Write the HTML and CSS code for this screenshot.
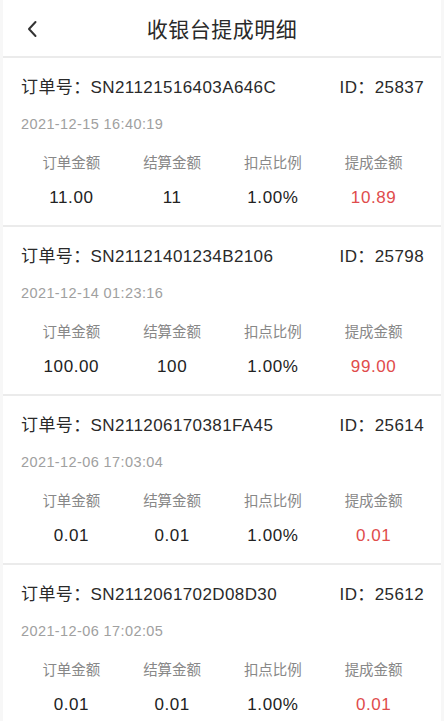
FILE: index.html
```html
<!DOCTYPE html>
<html lang="zh-cn">
<head>
    <meta charset="UTF-8">
    <meta name="viewport" content="width=device-width, initial-scale=1.0">
    <title>收银台提成明细</title>
    <link rel="stylesheet" href="styles.css">
</head>
<body>
    <header class="nav">
        <span class="back">
            <svg width="12" height="18" viewBox="0 0 12 18"><path d="M9.5 2 L3 9 L9.5 16" fill="none" stroke="#333" stroke-width="2" stroke-linecap="round" stroke-linejoin="round"/></svg>
        </span>
        <h1 class="title">收银台提成明细</h1>
    </header>

    <div class="list">
        <div class="card">
            <div class="row-top">
                <span>订单号：SN21121516403A646C</span>
                <span>ID：25837</span>
            </div>
            <div class="time">2021-12-15 16:40:19</div>
            <div class="stats">
                <div class="stat"><span class="label">订单金额</span><span class="value">11.00</span></div>
                <div class="stat"><span class="label">结算金额</span><span class="value">11</span></div>
                <div class="stat"><span class="label">扣点比例</span><span class="value">1.00%</span></div>
                <div class="stat"><span class="label">提成金额</span><span class="value red">10.89</span></div>
            </div>
        </div>

        <div class="card">
            <div class="row-top">
                <span>订单号：SN21121401234B2106</span>
                <span>ID：25798</span>
            </div>
            <div class="time">2021-12-14 01:23:16</div>
            <div class="stats">
                <div class="stat"><span class="label">订单金额</span><span class="value">100.00</span></div>
                <div class="stat"><span class="label">结算金额</span><span class="value">100</span></div>
                <div class="stat"><span class="label">扣点比例</span><span class="value">1.00%</span></div>
                <div class="stat"><span class="label">提成金额</span><span class="value red">99.00</span></div>
            </div>
        </div>

        <div class="card">
            <div class="row-top">
                <span>订单号：SN211206170381FA45</span>
                <span>ID：25614</span>
            </div>
            <div class="time">2021-12-06 17:03:04</div>
            <div class="stats">
                <div class="stat"><span class="label">订单金额</span><span class="value">0.01</span></div>
                <div class="stat"><span class="label">结算金额</span><span class="value">0.01</span></div>
                <div class="stat"><span class="label">扣点比例</span><span class="value">1.00%</span></div>
                <div class="stat"><span class="label">提成金额</span><span class="value red">0.01</span></div>
            </div>
        </div>

        <div class="card">
            <div class="row-top">
                <span>订单号：SN2112061702D08D30</span>
                <span>ID：25612</span>
            </div>
            <div class="time">2021-12-06 17:02:05</div>
            <div class="stats">
                <div class="stat"><span class="label">订单金额</span><span class="value">0.01</span></div>
                <div class="stat"><span class="label">结算金额</span><span class="value">0.01</span></div>
                <div class="stat"><span class="label">扣点比例</span><span class="value">1.00%</span></div>
                <div class="stat"><span class="label">提成金额</span><span class="value red">0.01</span></div>
            </div>
        </div>
    </div>
</body>
</html>
```

FILE: styles.css
```css
body {
    margin: 0;
    background-color: #f7f7f7;
    font-family: "Liberation Sans", "Noto Sans CJK SC", sans-serif;
    color: #333333;
    height: 721px;
    overflow: hidden;
}

.nav {
    height: 56px;
    margin: 0 3px;
    background: #ffffff;
    display: flex;
    align-items: center;
    justify-content: center;
    position: relative;
    border-bottom: 2px solid #ebebeb;
}

.back {
    position: absolute;
    left: 23px;
    top: 20px;
    display: flex;
}

.title {
    margin: 0;
    font-size: 21px;
    font-weight: 400;
    color: #2a2a2a;
    letter-spacing: 0.5px;
}

.list {
    display: flex;
    flex-direction: column;
    gap: 2px;
    margin: 0 3px;
    background: #ebebeb;
}

.card {
    height: 167px;
    background: #ffffff;
    padding: 16px 17px 0 18px;
    box-sizing: border-box;
}

.row-top {
    display: flex;
    justify-content: space-between;
    font-size: 17px;
    line-height: 28px;
    letter-spacing: 0.4px;
    color: #2a2a2a;
}

.time {
    margin-top: 12px;
    font-size: 14.5px;
    line-height: 20px;
    letter-spacing: 0.4px;
    color: #a0a0a0;
}

.stats {
    display: grid;
    grid-template-columns: repeat(4, 1fr);
    margin-top: 19px;
}

.stat {
    display: flex;
    flex-direction: column;
    align-items: center;
}

.label {
    font-size: 14.5px;
    line-height: 20px;
    color: #888888;
}

.value {
    margin-top: 14px;
    font-size: 17px;
    line-height: 22px;
    letter-spacing: 0.6px;
    color: #222222;
}

.red {
    color: #e04c4c;
}
```
